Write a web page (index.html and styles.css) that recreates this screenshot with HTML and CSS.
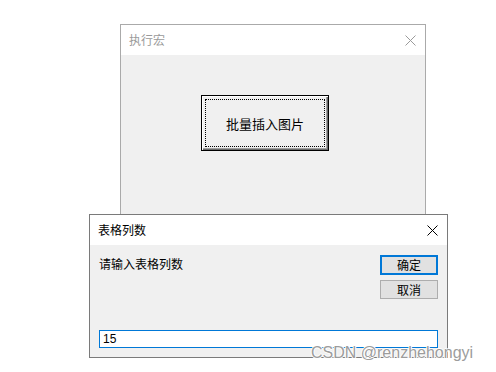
FILE: index.html
```html
<html>
<head>
   <meta charset="utf-8">
   <link rel="stylesheet" href="styles.css">
</head>
<body>
   <div class="desktop">
      <div class="win win-back">
         <div class="titlebar">
            <span class="title muted">执行宏</span>
            <svg class="close" width="11" height="11" viewBox="0 0 11 11"><path d="M0.5 0.5L10.5 10.5M10.5 0.5L0.5 10.5" stroke="#9a9a9a" stroke-width="1"/></svg>
         </div>
         <div class="win-body back-body">
            <button class="classic-btn"><span class="focus-rect">批量插入图片</span></button>
         </div>
      </div>

      <div class="win win-front">
         <div class="titlebar">
            <span class="title">表格列数</span>
            <svg class="close" width="11" height="11" viewBox="0 0 11 11"><path d="M0.5 0.5L10.5 10.5M10.5 0.5L0.5 10.5" stroke="#000" stroke-width="1"/></svg>
         </div>
         <div class="win-body front-body">
            <div class="prompt-row">
               <span class="prompt">请输入表格列数</span>
               <div class="btn-col">
                  <button class="btn default">确定</button>
                  <button class="btn">取消</button>
               </div>
            </div>
            <input type="text" class="answer" value="15">
         </div>
      </div>

      <div class="watermark">CSDN @renzhehongyi</div>
   </div>
</body>
</html>
```

FILE: styles.css
```css
body {
   margin: 0;
   background-color: #fff;
   font-family: "Noto Sans CJK SC", "Liberation Sans", sans-serif;
   font-size: 12px;
   color: #000;
}
.desktop {
   position: relative;
   width: 496px;
   height: 372px;
   overflow: hidden;
}
.win {
   position: absolute;
   display: flex;
   flex-direction: column;
   background-color: #f0f0f0;
   box-sizing: border-box;
}
.win-back {
   left: 120px;
   top: 24px;
   width: 306px;
   height: 210px;
   border: 1px solid #aaaaaa;
}
.win-front {
   left: 89px;
   top: 214px;
   width: 359px;
   height: 144px;
   border: 1px solid #7a7a7a;
}
.titlebar {
   display: flex;
   align-items: center;
   justify-content: space-between;
   height: 30px;
   background-color: #fff;
   padding: 0 9px 0 8px;
   flex-shrink: 0;
}
.title {
   line-height: 14px;
}
.title.muted {
   color: #9a9a9a;
}
.win-body {
   flex: 1;
   display: flex;
}
.back-body {
   padding: 40px 0 0 80px;
   align-items: flex-start;
}
.classic-btn {
   display: flex;
   width: 128px;
   height: 56px;
   padding: 3px;
   box-sizing: border-box;
   border: 1px solid #000;
   background-color: #f0f0f0;
   box-shadow: inset 1px 1px #fff, inset -1px -1px #696969, inset -2px -2px #a0a0a0;
   font-family: inherit;
   font-size: 13px;
   color: #000;
}
.focus-rect {
   flex: 1;
   display: flex;
   align-items: center;
   justify-content: center;
   border: 1px dotted #000;
}
.front-body {
   flex-direction: column;
   justify-content: space-between;
   padding: 10px 9px 9px 9px;
}
.prompt-row {
   display: flex;
   justify-content: space-between;
   align-items: flex-start;
}
.prompt {
   padding-top: 2px;
   line-height: 14px;
}
.btn-col {
   display: flex;
   flex-direction: column;
   gap: 5px;
}
.btn {
   width: 58px;
   height: 19px;
   padding: 0;
   box-sizing: border-box;
   border: 1px solid #adadad;
   background-color: #e1e1e1;
   font-family: inherit;
   font-size: 12px;
   line-height: 14px;
   color: #000;
}
.btn.default {
   height: 20px;
   border: 2px solid #0078d7;
}
.answer {
   width: 339px;
   height: 18px;
   box-sizing: border-box;
   border: 1px solid #0078d7;
   padding: 0 3px;
   font-family: "Liberation Sans", sans-serif;
   font-size: 12px;
   color: #000;
   outline: none;
}
.watermark {
   position: absolute;
   left: 311px;
   top: 344px;
   font-family: "Liberation Sans", sans-serif;
   font-size: 16px;
   color: #9c9c9c;
   text-shadow: 1px 0 #fff, -1px 0 #fff, 0 1px #fff, 0 -1px #fff;
   white-space: nowrap;
}
```
